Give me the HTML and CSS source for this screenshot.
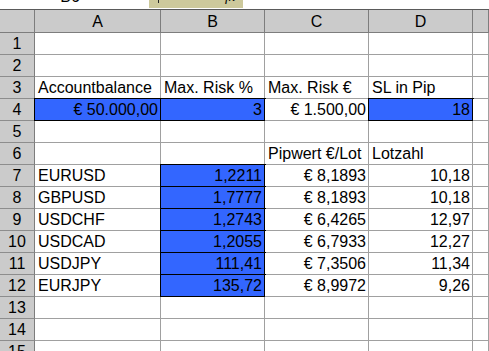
FILE: index.html
```html
<!DOCTYPE html>
<html>
<head>
<meta charset="utf-8">
<link rel="stylesheet" href="styles.css">
</head>
<body>
<div class="topbar">
  <div class="namebox"><span class="clip">B6</span></div>
  <div class="gap"></div>
  <div class="formula"><span class="tick"></span><span class="fx">fx</span></div>
  <div class="rest"></div>
</div>
<div class="sheet">
  <div class="corner"></div><div class="ch">A</div><div class="ch">B</div><div class="ch">C</div><div class="ch">D</div><div class="ch"></div>

  <div class="rh">1</div><div class="c"></div><div class="c"></div><div class="c"></div><div class="c"></div><div class="c"></div>
  <div class="rh">2</div><div class="c"></div><div class="c"></div><div class="c"></div><div class="c"></div><div class="c"></div>
  <div class="rh">3</div><div class="c">Accountbalance</div><div class="c">Max. Risk %</div><div class="c">Max. Risk €</div><div class="c">SL in Pip</div><div class="c"></div>
  <div class="rh">4</div><div class="c r blue">€ 50.000,00</div><div class="c r blue">3</div><div class="c r">€ 1.500,00</div><div class="c r blue">18</div><div class="c"></div>
  <div class="rh">5</div><div class="c"></div><div class="c"></div><div class="c"></div><div class="c"></div><div class="c"></div>
  <div class="rh">6</div><div class="c"></div><div class="c"></div><div class="c">Pipwert €/Lot</div><div class="c">Lotzahl</div><div class="c"></div>
  <div class="rh">7</div><div class="c">EURUSD</div><div class="c r blue">1,2211</div><div class="c r">€ 8,1893</div><div class="c r">10,18</div><div class="c"></div>
  <div class="rh">8</div><div class="c">GBPUSD</div><div class="c r blue">1,7777</div><div class="c r">€ 8,1893</div><div class="c r">10,18</div><div class="c"></div>
  <div class="rh">9</div><div class="c">USDCHF</div><div class="c r blue">1,2743</div><div class="c r">€ 6,4265</div><div class="c r">12,97</div><div class="c"></div>
  <div class="rh">10</div><div class="c">USDCAD</div><div class="c r blue">1,2055</div><div class="c r">€ 6,7933</div><div class="c r">12,27</div><div class="c"></div>
  <div class="rh">11</div><div class="c">USDJPY</div><div class="c r blue">111,41</div><div class="c r">€ 7,3506</div><div class="c r">11,34</div><div class="c"></div>
  <div class="rh">12</div><div class="c">EURJPY</div><div class="c r blue">135,72</div><div class="c r">€ 8,9972</div><div class="c r">9,26</div><div class="c"></div>
  <div class="rh">13</div><div class="c"></div><div class="c"></div><div class="c"></div><div class="c"></div><div class="c"></div>
  <div class="rh">14</div><div class="c"></div><div class="c"></div><div class="c"></div><div class="c"></div><div class="c"></div>
  <div class="rh">15</div><div class="c"></div><div class="c"></div><div class="c"></div><div class="c"></div><div class="c"></div>
</div>
</body>
</html>
```
FILE: styles.css
```css
html, body {
  margin: 0;
  padding: 0;
  background: #ffffff;
  overflow: hidden;
}
body {
  width: 489px;
  height: 351px;
  font-family: "Liberation Sans", Arial, sans-serif;
  font-size: 16px;
  color: #000;
}
.topbar {
  display: flex;
  height: 8px;
  border-bottom: 1px solid #ffffff;
  overflow: hidden;
}
.namebox {
  width: 140px;
  background: #fff;
  display: flex;
  justify-content: center;
  overflow: hidden;
}
.clip {
  display: block;
  line-height: 16px;
  margin-top: -11px;
}
.gap {
  width: 9px;
  background: #fff;
}
.formula {
  width: 94px;
  background: #cdc99c;
  position: relative;
  overflow: hidden;
}
.tick {
  position: absolute;
  left: 9px;
  top: 0;
  width: 1px;
  height: 3px;
  background: #222;
}
.fx {
  position: absolute;
  left: 76px;
  top: -11px;
  line-height: 16px;
  font-family: "Liberation Serif", serif;
  font-style: italic;
  font-size: 14px;
}
.rest {
  flex: 1;
  background: #fff;
}
.sheet {
  display: grid;
  grid-template-columns: 35px 126px 104px 104px 104px 1fr;
  grid-template-rows: 23px repeat(15, 22px);
  border-top: 1px solid #5a5a5a;
}
.sheet > div {
  box-sizing: border-box;
  white-space: nowrap;
  overflow: hidden;
}
.corner, .ch {
  background: #cbcbcb;
  border-right: 1px solid #7d7d7d;
  border-bottom: 1px solid #7d7d7d;
  text-align: center;
  line-height: 21px;
  padding-top: 1px;
}
.rh {
  background: #cbcbcb;
  border-right: 1px solid #7d7d7d;
  border-bottom: 1px solid #8d8d8d;
  text-align: center;
  line-height: 21px;
}
.c {
  background: #fff;
  border-right: 1px solid #a0a0a0;
  border-bottom: 1px solid #a0a0a0;
  line-height: 21px;
  padding: 0 2px 0 3px;
}
.r {
  text-align: right;
}
.sheet > .blue {
  background: #3366ff;
  border-right: 1px solid #000;
  border-bottom: 1px solid #000;
  box-shadow: 0 0 0 1px #000;
  overflow: visible;
}
```
